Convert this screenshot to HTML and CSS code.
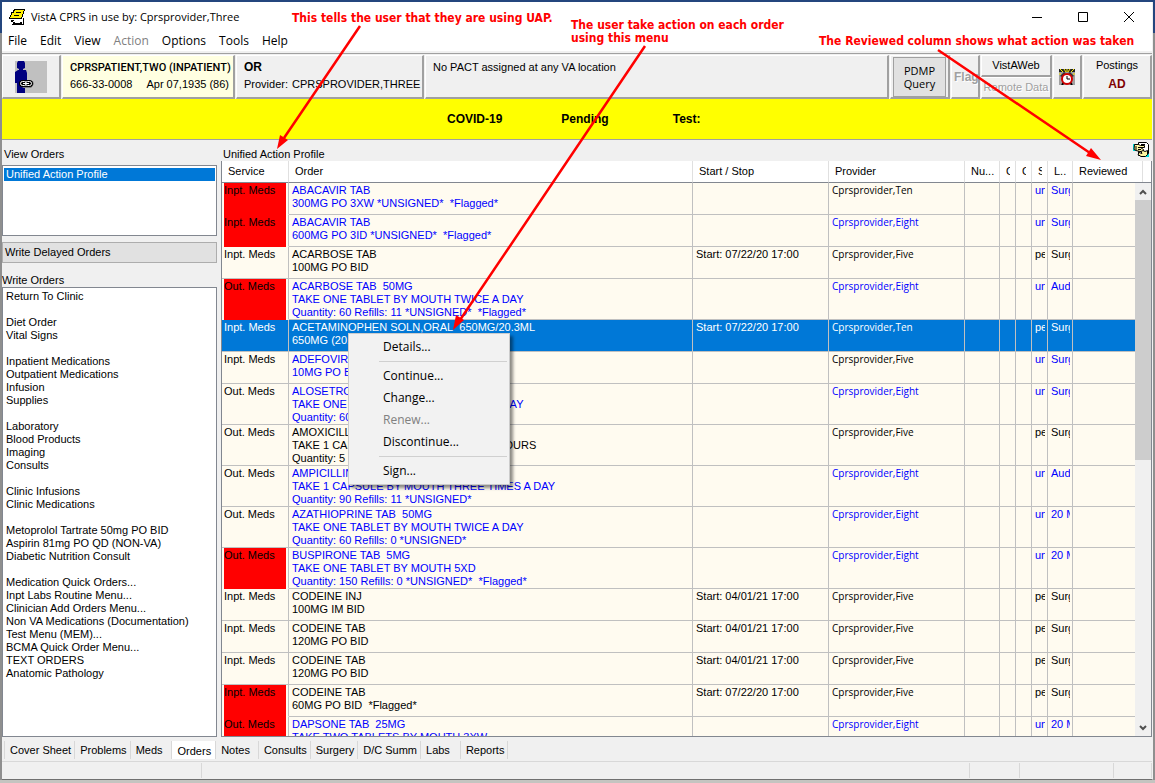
FILE: index.html
```html
<!DOCTYPE html>
<html lang="en">
<head>
<meta charset="utf-8">
<title>VistA CPRS in use by: Cprsprovider,Three</title>
<link rel="stylesheet" href="styles.css">
</head>
<body>
<div class="window">
  <header class="titlebar">
    <svg class="app-icon" viewBox="0 0 16 16" width="16" height="16" shape-rendering="crispEdges">
      <path d="M3 8h12v7H3z" fill="#fff"/>
      <path d="M5 0h11v2h-1v3h-1v3h-1v2H0V8h1V6h1V3h2V1h1z" fill="#000"/>
      <path d="M6 1h9v1h-1v3h-1v3h-1v1H1V8h1V6h1V4h2V2h1z" fill="#ffee00"/>
      <path d="M7 3h5v1H7zM5 6h5v1H5zM4 11h1v1H4zM4 13h9v2H4zM14 9h1v7h-1zM2 11h2v2H2zM3 15h12v1H3z" fill="#000"/>
      <path d="M6 13h5v1H6z" fill="#fff"/>
    </svg>
    <h1 class="title">VistA CPRS in use by: Cprsprovider,Three</h1>
    <div class="controls">
      <button class="control" aria-label="Minimize"><svg viewBox="0 0 12 12" width="12" height="12"><path d="M1 6.500h10" stroke="#000"/></svg></button>
      <button class="control" aria-label="Maximize"><svg viewBox="0 0 12 12" width="12" height="12"><path d="M1.500 1.500h9v9h-9z" fill="none" stroke="#000"/></svg></button>
      <button class="control" aria-label="Close"><svg viewBox="0 0 12 12" width="12" height="12"><path d="M1 1l10 10M11 1L1 11" stroke="#000"/></svg></button>
    </div>
  </header>
  <nav class="menubar">
    <button>File</button><button>Edit</button><button>View</button><button disabled>Action</button><button>Options</button><button>Tools</button><button>Help</button>
  </nav>

  <section class="toolbar">
    <button class="panel patient-pic" aria-label="Patient">
      <svg viewBox="0 0 32 32" width="32" height="32">
        <path d="M0 0h32v32H0z" fill="#c0c0c0"/>
        <path d="M3 0h6l1 2v5l-2 1v1h3l1 3v11h-2v9H2V22H0V11l3-2h1V8L2 7V2z" fill="#000080"/>
        <path d="M7 27h9l3-4-1-3" fill="#808080"/>
        <rect x="5.500" y="20.500" width="6" height="4" rx="2" fill="none" stroke="#000" stroke-width="3"/>
        <rect x="10.500" y="20.500" width="6" height="4" rx="2" fill="none" stroke="#000" stroke-width="3"/>
        <rect x="5.500" y="20.500" width="6" height="4" rx="2" fill="#000" stroke="#fff"/>
        <rect x="10.500" y="20.500" width="6" height="4" rx="2" fill="#000" stroke="#fff"/>
        <path d="M8 22.500h6" stroke="#fff"/>
      </svg>
    </button>
    <button class="panel patient">
      <span class="patient-name">CPRSPATIENT,TWO (INPATIENT)</span>
      <span class="patient-info"><span>666-33-0008</span><span>Apr 07,1935 (86)</span></span>
    </button>
    <button class="panel encounter">
      <strong>OR</strong>
      <span class="provider-line"><span>Provider:</span><span>CPRSPROVIDER,THREE</span></span>
    </button>
    <button class="panel care-team">No PACT assigned at any VA location</button>
    <div class="panel pdmp"><button class="pdmp-button">PDMP<br>Query</button></div>
    <button class="panel flag" disabled>Flag</button>
    <div class="remote">
      <button class="panel">VistAWeb</button>
      <button class="panel" disabled>Remote Data</button>
    </div>
    <button class="panel alarm" aria-label="Reminders">
      <svg viewBox="0 0 16 16" width="16" height="16">
        <path d="M0 0h16v16H0z" fill="#a0a0a0"/>
        <path d="M0 0h16v3H0z" fill="#222"/>
        <path d="M1 0l3 3M5 0l2 3M8 0v3M11 0L9 3M15 0l-3 3M0 5h2M14 5h2" stroke="#ffee00"/>
        <path d="M1 7l4-4 2 1-4 4zM15 7l-4-4-2 1 4 4z" fill="#333"/>
        <path d="M3 16l2-3M13 16l-2-3" stroke="#000" stroke-width="2"/>
        <circle cx="8" cy="10" r="5" fill="#fff" stroke="#d00000" stroke-width="2"/>
        <path d="M8 7v3h3" fill="none" stroke="#000"/>
      </svg>
    </button>
    <button class="panel postings"><span>Postings</span><strong>AD</strong></button>
  </section>

  <section class="covid"><span>COVID-19</span><span>Pending</span><span>Test:</span></section>

  <main class="workspace">
    <aside class="side">
      <h2 class="label">View Orders</h2>
      <ul class="list views"><li class="selected">Unified Action Profile</li></ul>
      <button class="delayed">Write Delayed Orders</button>
      <h2 class="label write-label">Write Orders</h2>
      <ul class="list write">
        <li>Return To Clinic</li><li></li>
        <li>Diet Order</li><li>Vital Signs</li><li></li>
        <li>Inpatient Medications</li><li>Outpatient Medications</li><li>Infusion</li><li>Supplies</li><li></li>
        <li>Laboratory</li><li>Blood Products</li><li>Imaging</li><li>Consults</li><li></li>
        <li>Clinic Infusions</li><li>Clinic Medications</li><li></li>
        <li>Metoprolol Tartrate 50mg PO BID</li><li>Aspirin 81mg PO QD (NON-VA)</li><li>Diabetic Nutrition Consult</li><li></li>
        <li>Medication Quick Orders...</li><li>Inpt Labs Routine Menu...</li><li>Clinician Add Orders Menu...</li><li>Non VA Medications (Documentation)</li><li>Test Menu (MEM)...</li><li>BCMA Quick Order Menu...</li><li>TEXT ORDERS</li><li>Anatomic Pathology</li>
      </ul>
    </aside>
    <section class="orders">
      <div class="orders-head">
        <h2 class="label">Unified Action Profile</h2>
        <svg viewBox="0 0 16 16" width="16" height="16">
          <path d="M0 2h3v7H0zM12 11h4v4h-4z" fill="#00e0e0"/>
          <path d="M5.500.500h8l2 2v9l-3 2h-7z" fill="#fff" stroke="#000"/>
          <path d="M1.500 2.500h4l2 1h4v2h-4l3 2v2H7l-4-1-2-1z" fill="#fff6a0" stroke="#000"/>
          <path d="M14.500 8.500v4l-2 2H8l-3-2 1-2 3 1-1-2 2-1 2 1z" fill="#fff6a0" stroke="#000"/>
          <path d="M8 2.500h4M3 4v4M5 5.500h3M5 7.500h3" stroke="#000" fill="none"/>
        </svg>
      </div>
      <div class="grid">
        <div class="grid-rows">
          <table>
            <colgroup><col class="c-service"><col><col class="c-start"><col class="c-provider"><col class="c-nurse"><col class="c-tiny"><col class="c-tiny"><col class="c-tiny"><col class="c-loc"><col class="c-reviewed"></colgroup>
            <thead><tr><th>Service</th><th>Order</th><th>Start / Stop</th><th>Provider</th><th>Nu...</th><th><span>C</span></th><th><span>C</span></th><th><span>S</span></th><th>L..</th><th>Reviewed</th></tr></thead>
            <tbody>
              <tr class="unsigned flagged"><td>Inpt. Meds</td><td>ABACAVIR TAB<br>300MG PO 3XW *UNSIGNED*&nbsp; *Flagged*</td><td></td><td class="dark">Cprsprovider,Ten</td><td></td><td></td><td></td><td><span>unr</span></td><td><span>Surgery</span></td><td></td></tr>
              <tr class="unsigned flagged"><td>Inpt. Meds</td><td>ABACAVIR TAB<br>600MG PO 3ID *UNSIGNED*&nbsp; *Flagged*</td><td></td><td>Cprsprovider,Eight</td><td></td><td></td><td></td><td><span>unr</span></td><td><span>Surgery</span></td><td></td></tr>
              <tr><td>Inpt. Meds</td><td>ACARBOSE TAB<br>100MG PO BID</td><td>Start: 07/22/20 17:00</td><td>Cprsprovider,Five</td><td></td><td></td><td></td><td><span>pend</span></td><td><span>Surgery</span></td><td></td></tr>
              <tr class="unsigned flagged"><td>Out. Meds</td><td>ACARBOSE TAB&nbsp; 50MG<br>TAKE ONE TABLET BY MOUTH TWICE A DAY<br>Quantity: 60 Refills: 11 *UNSIGNED*&nbsp; *Flagged*</td><td></td><td>Cprsprovider,Eight</td><td></td><td></td><td></td><td><span>unr</span></td><td><span>Aud</span></td><td></td></tr>
              <tr class="current"><td>Inpt. Meds</td><td>ACETAMINOPHEN SOLN,ORAL&nbsp; 650MG/20.3ML<br>650MG (20.</td><td>Start: 07/22/20 17:00</td><td>Cprsprovider,Ten</td><td></td><td></td><td></td><td><span>pend</span></td><td><span>Surgery</span></td><td></td></tr>
              <tr class="unsigned"><td>Inpt. Meds</td><td>ADEFOVIR<br>10MG PO BID</td><td></td><td class="dark">Cprsprovider,Five</td><td></td><td></td><td></td><td><span>unr</span></td><td><span>Surgery</span></td><td></td></tr>
              <tr class="unsigned"><td>Out. Meds</td><td>ALOSETRON<br>TAKE ONE TABLET BY MOUTH TWICE A DAY<br>Quantity: 60</td><td></td><td>Cprsprovider,Eight</td><td></td><td></td><td></td><td><span>unr</span></td><td><span>Surgery</span></td><td></td></tr>
              <tr><td>Out. Meds</td><td>AMOXICILLIN<br>TAKE 1 CAPSULE BY MOUTH EVERY 8 HOURS<br>Quantity: 5 R</td><td></td><td>Cprsprovider,Five</td><td></td><td></td><td></td><td><span>pend</span></td><td><span>Surgery</span></td><td></td></tr>
              <tr class="unsigned"><td>Out. Meds</td><td>AMPICILLIN<br>TAKE 1 CAPSULE BY MOUTH THREE TIMES A DAY<br>Quantity: 90 Refills: 11 *UNSIGNED*</td><td></td><td>Cprsprovider,Eight</td><td></td><td></td><td></td><td><span>unr</span></td><td><span>Aud</span></td><td></td></tr>
              <tr class="unsigned"><td>Out. Meds</td><td>AZATHIOPRINE TAB&nbsp; 50MG<br>TAKE ONE TABLET BY MOUTH TWICE A DAY<br>Quantity: 60 Refills: 0 *UNSIGNED*</td><td></td><td>Cprsprovider,Eight</td><td></td><td></td><td></td><td><span>unr</span></td><td><span>20 M</span></td><td></td></tr>
              <tr class="unsigned flagged"><td>Out. Meds</td><td>BUSPIRONE TAB&nbsp; 5MG<br>TAKE ONE TABLET BY MOUTH 5XD<br>Quantity: 150 Refills: 0 *UNSIGNED*&nbsp; *Flagged*</td><td></td><td>Cprsprovider,Eight</td><td></td><td></td><td></td><td><span>unr</span></td><td><span>20 M</span></td><td></td></tr>
              <tr><td>Inpt. Meds</td><td>CODEINE INJ<br>100MG IM BID</td><td>Start: 04/01/21 17:00</td><td>Cprsprovider,Five</td><td></td><td></td><td></td><td><span>pend</span></td><td><span>Surgery</span></td><td></td></tr>
              <tr><td>Inpt. Meds</td><td>CODEINE TAB<br>120MG PO BID</td><td>Start: 04/01/21 17:00</td><td>Cprsprovider,Five</td><td></td><td></td><td></td><td><span>pend</span></td><td><span>Surgery</span></td><td></td></tr>
              <tr><td>Inpt. Meds</td><td>CODEINE TAB<br>120MG PO BID</td><td>Start: 04/01/21 17:00</td><td>Cprsprovider,Five</td><td></td><td></td><td></td><td><span>pend</span></td><td><span>Surgery</span></td><td></td></tr>
              <tr class="flagged"><td>Inpt. Meds</td><td>CODEINE TAB<br>60MG PO BID&nbsp; *Flagged*</td><td>Start: 07/22/20 17:00</td><td>Cprsprovider,Five</td><td></td><td></td><td></td><td><span>pend</span></td><td><span>Surgery</span></td><td></td></tr>
              <tr class="unsigned flagged"><td>Out. Meds</td><td>DAPSONE TAB&nbsp; 25MG<br>TAKE TWO TABLETS BY MOUTH 3XW</td><td></td><td>Cprsprovider,Eight</td><td></td><td></td><td></td><td><span>unr</span></td><td><span>20 M</span></td><td></td></tr>
            </tbody>
          </table>
        </div>
        <div class="scroll">
          <div class="scroll-head"></div>
          <button class="scroll-arrow" aria-label="Scroll up"><svg viewBox="0 0 8 6" width="8" height="6"><path d="M1 5l3-3 3 3" fill="none" stroke="#505050" stroke-width="2"/></svg></button>
          <div class="scroll-track"><div class="scroll-thumb"></div></div>
          <button class="scroll-arrow" aria-label="Scroll down"><svg viewBox="0 0 8 6" width="8" height="6"><path d="M1 1l3 3 3-3" fill="none" stroke="#505050" stroke-width="2"/></svg></button>
        </div>
      </div>
    </section>
  </main>

  <nav class="tabs">
    <button>Cover Sheet</button><button>Problems</button><button class="roomy">Meds</button><button class="active">Orders</button><button class="roomy">Notes</button><button>Consults</button><button>Surgery</button><button>D/C Summ</button><button class="wide">Labs</button><button>Reports</button>
  </nav>
  <footer class="status"><span class="s1"></span><span class="s2"></span><span class="s3"></span><span class="s4"></span><span class="s5"></span></footer>
</div>

<div class="context-menu" role="menu">
  <button role="menuitem">Details...</button>
  <hr>
  <button role="menuitem">Continue...</button>
  <button role="menuitem">Change...</button>
  <button role="menuitem" disabled>Renew...</button>
  <button role="menuitem">Discontinue...</button>
  <hr>
  <button role="menuitem">Sign...</button>
</div>

<p class="note note-profile">This tells the user that they are using UAP.</p>
<p class="note note-menu">The user take action on each order<br>using this menu</p>
<p class="note note-reviewed">The Reviewed column shows what action was taken</p>
<svg class="arrows" viewBox="0 0 1155 783" width="1155" height="783">
  <g stroke="#f00" stroke-width="2.500" fill="#f00">
    <path d="M360 26L284 138M645 46L460 320M938 50L1090 153"/>
    <path d="M277 149l3-14 8 5zM453 330l3-15 8 5zM1101 160l-15-4 5-8z" stroke="none"/>
  </g>
</svg>
</body>
</html>
```
FILE: styles.css
```css
* { box-sizing: border-box; }

body {
  margin: 0;
  height: 100vh;
  padding: 2px 2px 3px;
  display: flex;
  background: linear-gradient(#24467e 0 33px, #8f8f8f 33px calc(100% - 3px), #c4c4c0 calc(100% - 3px));
  color: #000;
  font: 11px/13px "Liberation Sans", Arial, sans-serif;
  position: relative;
  overflow: hidden;
}

button {
  font: inherit;
  color: inherit;
  border: 0;
  padding: 0;
  margin: 0;
  background: none;
  text-align: left;
}

h1, h2, p, ul { margin: 0; padding: 0; font: inherit; }
ul { list-style: none; }

.window {
  flex: 1;
  min-width: 0;
  display: flex;
  flex-direction: column;
  background: #f0f0f0;
  border-right: 1px solid #f0f0f0;
  border-bottom: 1px solid #707070;
}

/* Title bar and menu */
.titlebar {
  display: flex;
  align-items: center;
  gap: 6px;
  height: 29px;
  padding-left: 7px;
  background: #fff;
}
.title { flex: 1; font: 11px/16px "Open Sans", sans-serif; }
.controls { display: flex; }
.control {
  width: 46px;
  height: 29px;
  display: flex;
  align-items: center;
  justify-content: center;
}
.menubar {
  display: flex;
  height: 20px;
  background: #fff;
  font: 12px/20px "Open Sans", sans-serif;
}
.menubar button { padding: 0 7px 0 6px; }
.menubar button:disabled { color: #808080; }

/* Patient toolbar */
.toolbar {
  display: flex;
  gap: 1px;
  height: 46px;
  margin-top: 2px;
  border-top: 1px solid #a0a0a0;
  padding-top: 1px;
}
.panel {
  display: flex;
  border: 1px solid #fff;
  border-right: 2px solid #a0a0a0;
  border-bottom: 2px solid #a0a0a0;
}
.patient-pic { width: 59px; padding-left: 12px; align-items: center; }
.patient {
  width: 173px;
  padding: 4px 4px 0 7px;
  flex-direction: column;
  background: #ffffe1;
}
.patient-name { font: 500 11px/16px Roboto, sans-serif; white-space: nowrap; }
.patient-info { display: flex; justify-content: space-between; padding-top: 2px; align-self: stretch; }
.encounter { width: 188px; padding: 5px 0 0 7px; flex-direction: column; gap: 4px; }
.encounter strong, .postings strong { font-size: 12px; }
.provider-line { display: flex; gap: 4px; }
.care-team { flex: 1; padding: 5px 0 0 7px; }
.pdmp { width: 60px; padding: 1px 2px 0; }
.pdmp-button {
  flex: 1;
  border: 1px solid #a0a0a0;
  background: #e1e1e1;
  font: 11px/13px "Open Sans", sans-serif;
  text-align: center;
}
.flag { width: 29px; padding: 15px 0 0 2px; overflow: hidden; font-size: 12px; font-weight: bold; }
.panel:disabled { color: #a0a0a0; text-shadow: 1px 1px #fff; }
.remote { width: 71px; display: flex; flex-direction: column; }
.remote .panel { flex: 1; justify-content: center; align-items: center; white-space: nowrap; overflow: hidden; }
.alarm { width: 29px; justify-content: center; align-items: center; }
.postings { width: 69px; flex-direction: column; align-items: center; padding-top: 3px; gap: 6px; }
.postings strong { color: #800000; }

.covid {
  display: flex;
  gap: 59px;
  height: 41px;
  align-items: center;
  padding-left: 445px;
  background: #ff0;
  border-bottom: 1px solid #a0a0a0;
  font-size: 12px;
  font-weight: bold;
}
.covid span:last-child { padding-left: 5px; }

/* Work area */
.workspace { flex: 1; min-height: 0; display: flex; gap: 4px; padding-top: 8px; }
.side { width: 215px; display: flex; flex-direction: column; }
.label { padding-left: 2px; }
.list { background: #fff; border: 1px solid #828790; padding: 2px 1px; }
.list li { height: 13px; padding-left: 2px; white-space: nowrap; }
.views { height: 71px; margin-top: 4px; }
.views .selected { background: #0078d7; color: #fff; }
.delayed {
  height: 21px;
  margin-top: 6px;
  padding-left: 2px;
  border: 1px solid #adadad;
  background: #e1e1e1;
}
.write-label { padding: 11px 0 0; }
.write { flex: 1; min-height: 0; overflow: hidden; }

.orders { flex: 1; min-width: 0; display: flex; flex-direction: column; }
.orders-head { display: flex; justify-content: space-between; height: 13px; padding-right: 3px; }
.orders-head svg { margin-top: -6px; }
.grid {
  flex: 1;
  min-height: 0;
  display: flex;
  border: 1px solid #828790;
  border-top: 0;
}
.grid-rows { flex: 1; min-width: 0; overflow: hidden; background: #fffbf0; }
table { width: 100%; table-layout: fixed; border-collapse: separate; border-spacing: 0; }
.c-service { width: 67px; }
.c-start, .c-provider { width: 136px; }
.c-nurse { width: 35px; }
.c-tiny { width: 16px; }
.c-loc { width: 25px; }
.c-reviewed { width: 62px; }
th {
  height: 22px;
  padding: 0 0 0 6px;
  text-align: left;
  font-weight: normal;
  white-space: nowrap;
  background: #fff;
  border-right: 1px solid #e0e0e0;
  border-bottom: 1px solid #828790;
}
th:last-child { border-right: 0; }
th span { display: block; width: 4px; overflow: hidden; }
td {
  height: 32px;
  padding: 1px 0 0 3px;
  vertical-align: top;
  white-space: nowrap;
  border-right: 1px solid #c0c0c0;
  border-bottom: 1px solid #c0c0c0;
}
td:first-child { padding-left: 2px; }
td:last-child { border-right: 0; }
td span { display: block; overflow: hidden; margin-right: 2px; }
td:nth-child(4) { font: 10px/13px "Open Sans", sans-serif; }
.unsigned td { color: #00f; }
.unsigned td:first-child, .unsigned .dark { color: #000; }
.flagged td:first-child {
  background: linear-gradient(#f00, #f00) 2px 0 / calc(100% - 5px) 100% no-repeat border-box;
  border-bottom-color: transparent;
}
.current td { background: #0078d7; color: #fff; }

.scroll { width: 16px; display: flex; flex-direction: column; background: #f0f0f0; }
.scroll-head { height: 22px; background: linear-gradient(90deg, #fff 7px, #e0e0e0 7px 8px, #fff 8px); border-bottom: 1px solid #828790; }
.scroll-arrow { height: 17px; display: flex; align-items: center; justify-content: center; }
.scroll-track { flex: 1; }
.scroll-thumb { height: 50%; background: #cdcdcd; }

/* Tabs and status bar */
.tabs { display: flex; height: 24px; padding: 4px 0 2px 2px; }
.tabs button { padding: 0 3px 0 5px; border-right: 1px solid #d8d8d8; white-space: nowrap; }
.tabs button:first-child { border-left: 1px solid #d8d8d8; }
.tabs .active { background: #fff; padding: 3px 4px 0 6px; }
.tabs .roomy { padding-right: 8px; }
.tabs .wide { padding-right: 10px; }
.status { display: flex; height: 18px; border-top: 1px solid #d8d8d8; padding: 1px 0; }
.status span { border-right: 1px solid #d8d8d8; }
.s1 { width: 200px; }
.s2 { flex: 1; }
.s3 { width: 50px; }
.s4 { width: 94px; }
.s5 { width: 38px; }

/* Layers above the window */
.context-menu {
  position: absolute;
  left: 348px;
  top: 333px;
  width: 162px;
  padding: 2px;
  display: flex;
  flex-direction: column;
  background: #f2f2f2;
  border: 1px solid #ccc;
  box-shadow: 3px 3px 3px rgba(0, 0, 0, .45);
  font: 12px/22px "Open Sans", sans-serif;
}
.context-menu button { height: 22px; padding-left: 32px; }
.context-menu button:disabled { color: #808080; }
.context-menu hr { width: 128px; height: 1px; margin: 3px 0 3px 28px; border: 0; background: #d0d0d0; }

.note {
  position: absolute;
  color: #f00;
  font: bold 12px/13px "DejaVu Sans Condensed", "DejaVu Sans", sans-serif;
  white-space: nowrap;
}
.note-profile { left: 292px; top: 12px; }
.note-menu { left: 571px; top: 19px; }
.note-reviewed { left: 819px; top: 35px; }
.arrows { position: absolute; left: 0; top: 0; pointer-events: none; }
```
